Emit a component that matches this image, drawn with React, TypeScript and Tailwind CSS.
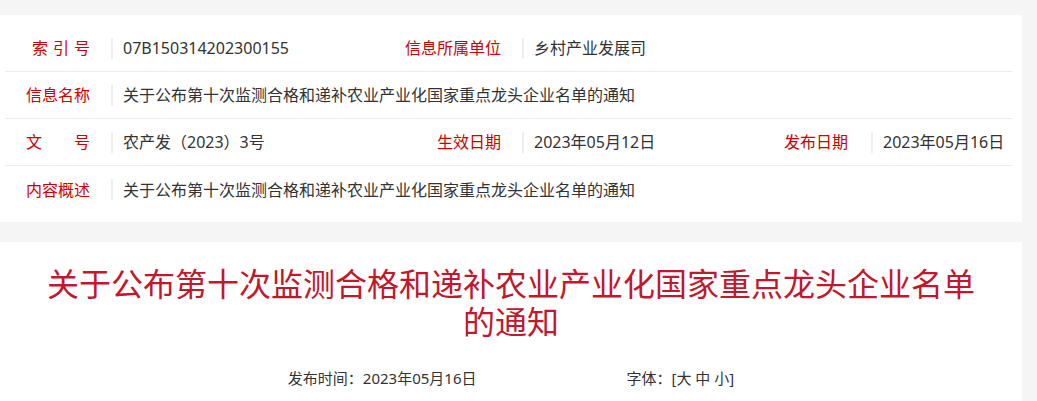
const FONT = { fontFamily: '"Noto Sans", "Noto Sans CJK SC", sans-serif' };

function Divider() {
  return <span className="ml-[21px] mr-[10px] h-[21px] w-[2px] shrink-0 bg-[#eeeeee]" />;
}

function Label({ children, className = '' }: { children: React.ReactNode; className?: string }) {
  return <div className={`shrink-0 text-right text-[#cc0000] ${className}`}>{children}</div>;
}

export default function App() {
  return (
    <div className="min-h-[401px] bg-[#f5f5f5] pt-[15px] text-[16px] text-[#333333]" style={FONT}>
      <div className="w-[1022px] bg-white pb-[9px] pl-[5px] pr-[10px] pt-[10px]">
        <div className="flex h-[47px] items-center border-b border-[#ebebeb]">
          <Label className="w-[85px]">
            <span className="inline-flex gap-[5px]">
              <span>索</span>
              <span>引</span>
              <span>号</span>
            </span>
          </Label>
          <Divider />
          <div className="w-[277px]">07B150314202300155</div>
          <Label className="w-[101px]">信息所属单位</Label>
          <Divider />
          <div>乡村产业发展司</div>
        </div>

        <div className="flex h-[47px] items-center border-b border-[#ebebeb]">
          <Label className="w-[85px]">信息名称</Label>
          <Divider />
          <div className="flex-1">关于公布第十次监测合格和递补农业产业化国家重点龙头企业名单的通知</div>
        </div>

        <div className="flex h-[47px] items-center border-b border-[#ebebeb]">
          <Label className="flex w-[85px] justify-end">
            <span className="flex w-[64px] justify-between">
              <span>文</span>
              <span>号</span>
            </span>
          </Label>
          <Divider />
          <div className="w-[277px]">农产发（2023）3号</div>
          <Label className="w-[101px]">生效日期</Label>
          <Divider />
          <div className="w-[226px]">2023年05月12日</div>
          <Label className="w-[88px]">发布日期</Label>
          <span className="ml-[23px] mr-[10px] h-[21px] w-[2px] shrink-0 bg-[#eeeeee]" />
          <div>2023年05月16日</div>
        </div>

        <div className="flex h-[47px] items-center">
          <Label className="w-[85px]">内容概述</Label>
          <Divider />
          <div className="flex-1">关于公布第十次监测合格和递补农业产业化国家重点龙头企业名单的通知</div>
        </div>
      </div>

      <div className="mt-[20px] w-[1022px] bg-white px-[40px] pb-[40px] pt-[23px]">
        <h1 className="text-center text-[32px] leading-[38px] text-[#c0182d]">
          关于公布第十次监测合格和递补农业产业化国家重点龙头企业名单的通知
        </h1>
        <div className="mt-[26px] flex justify-center gap-[150px] text-[15px] text-[#333333]">
          <span>发布时间：2023年05月16日</span>
          <span>字体：[大 中 小]</span>
        </div>
      </div>
    </div>
  );
}
